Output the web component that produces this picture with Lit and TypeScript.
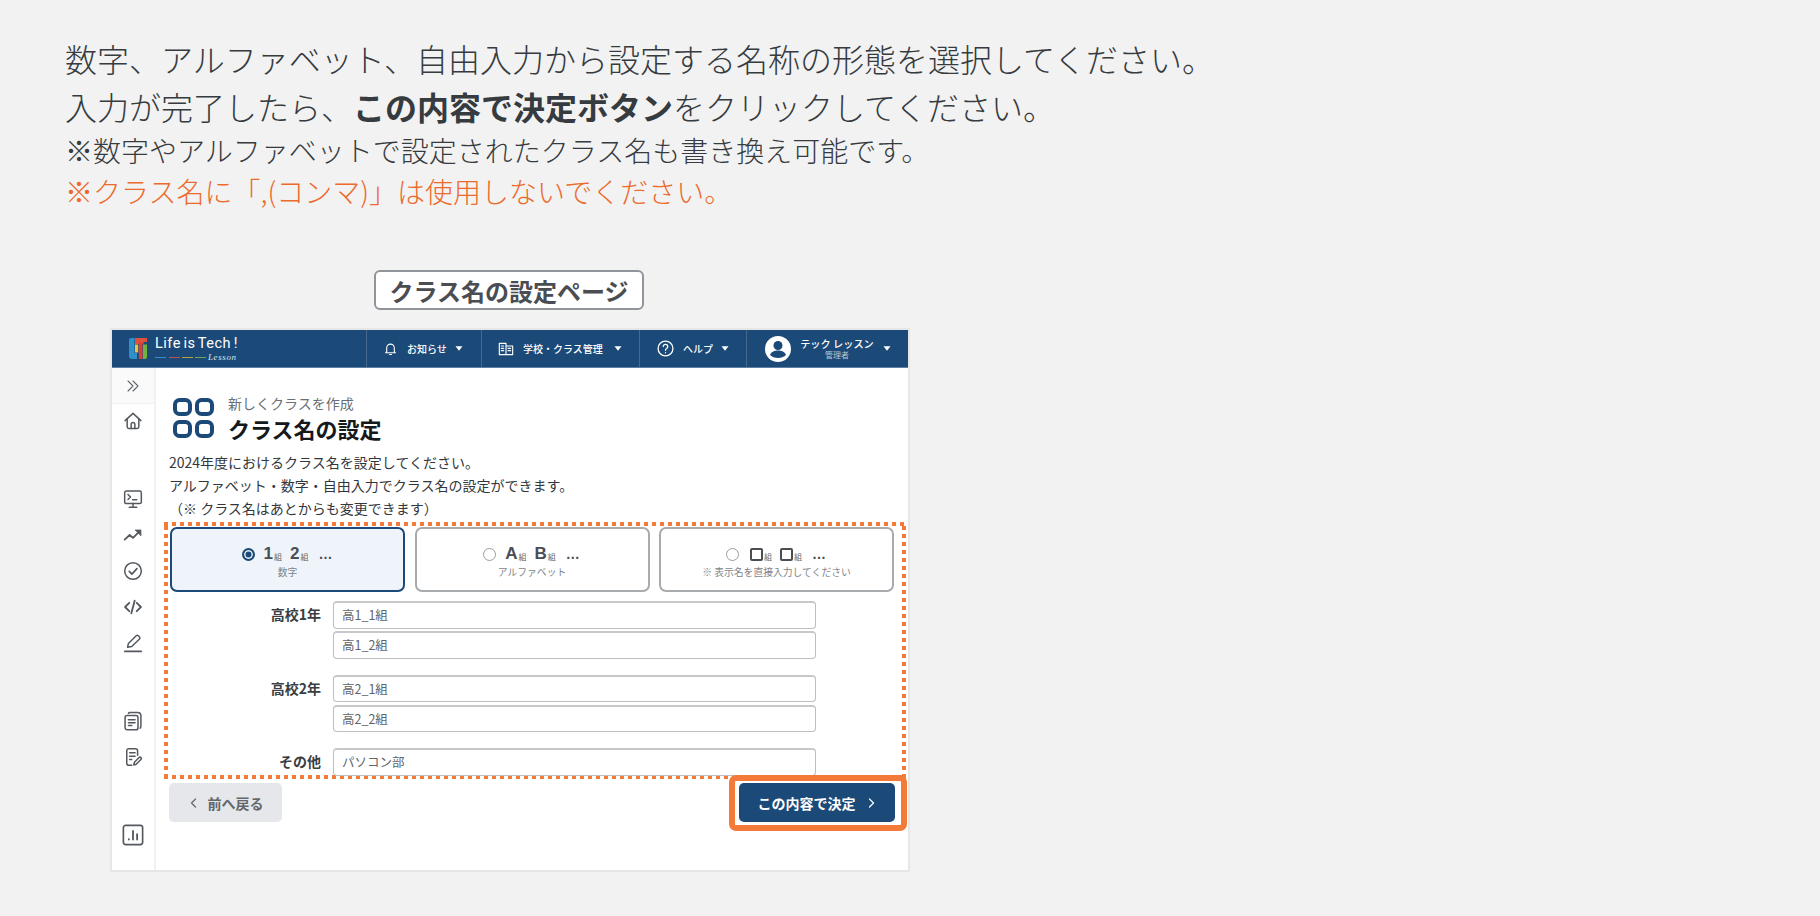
import { LitElement, html, css, svg } from "lit";
import { customElement } from "lit/decorators.js";

const ic = (w: number, h: number, body: unknown, sw = 1.8) =>
  html`<svg width=${w} height=${h} viewBox="0 0 24 24" fill="none" stroke="currentColor" stroke-width=${sw} stroke-linecap="round" stroke-linejoin="round">${body}</svg>`;

const caret = html`<svg class="caret" width="8" height="5" viewBox="0 0 8 5"><path d="M0.5 0.3h7L4 4.7z" fill="#fff"/></svg>`;

const sideIcons = {
  chev: svg`<path d="M4.500 4.500l7.500 7.500-7.500 7.500M12 4.500l7.500 7.500-7.500 7.500"/>`,
  home: svg`<path d="M2.500 11.500L12 2.800l9.500 8.700"/><path d="M5 9.500v9.500a2 2 0 0 0 2 2h10a2 2 0 0 0 2-2V9.500"/><path d="M9.800 21v-5a2.200 2.200 0 0 1 4.400 0v5"/>`,
  term: svg`<rect x="2" y="2.500" width="20" height="15" rx="2"/><path d="M6 6.500l3 3-3 3M11.500 13h5M12 17.500v4M7.500 21.800h9"/>`,
  trend: svg`<path d="M2 17.500l6-5.500 4 3.500 7.500-7.500" stroke-width="2.200"/><path d="M15 6h6.500v6.500z" fill="currentColor" stroke-width="1"/>`,
  check: svg`<circle cx="12" cy="12" r="10"/><path d="M7.500 12.500l3.200 3.200 6-6.500" stroke-width="2"/>`,
  code: svg`<path d="M7.500 7L2.500 12l5 5M16.500 7l5 5-5 5M14 4.500l-4 15" stroke-width="2.200"/>`,
  pen: svg`<path d="M5.500 17l1-4.500L15.800 3.200a1.800 1.800 0 0 1 2.500 0l1.500 1.500a1.800 1.800 0 0 1 0 2.500L10.500 16.200z"/><path d="M2 22h20" stroke-width="2"/>`,
  files: svg`<rect x="2.500" y="5.500" width="15.500" height="17" rx="2.500"/><path d="M6.500 2.800c.3-.6 1-1 1.800-1h9.200c2.300 0 4 1.700 4 4v12.500c0 .9-.4 1.700-1 2.200M6.500 10.500h8M6.500 14h8M6.500 17.500h4" /><path d="M10 4.800"/>`,
  form: svg`<path d="M10.500 22H7a2.500 2.500 0 0 1-2.500-2.500v-15A2.500 2.500 0 0 1 7 2h8a2.500 2.500 0 0 1 2.500 2.500V10"/><path d="M8 7h6.500M8 11h6.500M8 15h2.500"/><path d="M13 21.500l.7-3.200 5.600-5.600a1.500 1.500 0 0 1 2.200 2.200l-5.600 5.700z"/>`,
  chart: svg`<rect x="1.500" y="1.500" width="21" height="21" rx="2.500"/><path d="M7.500 16.500v.5M12 7.500V17M16.500 11V17" stroke-width="2"/>`,
};

@customElement("app-root")
export class AppRoot extends LitElement {
  static styles = css`
    :host {
      display: block;
      width: 1820px;
      height: 916px;
      background: #f2f2f2;
      overflow: hidden;
      font-family: "Noto Sans CJK JP", "Liberation Sans", sans-serif;
      color: #363b40;
    }
    .intro { padding: 33.500px 0 0 65px; height: 226px; box-sizing: border-box; }
    .l1 { font-size: 32px; line-height: 48px; font-weight: 300; white-space: nowrap; }
    .l3 { font-size: 28px; line-height: 41px; font-weight: 300; white-space: nowrap; }
    .red { color: #ec6a2c; }
    b { font-weight: 700; }
    .tagrow { display: flex; padding-left: 374px; height: 40px; margin-top: 44px; }
    .tag {
      box-sizing: border-box; width: 270px; height: 40px;
      border: 2px solid #8f959b; border-radius: 6px; background: #fff;
      font-size: 24px; font-weight: 700; color: #4a4d52;
      display: flex; align-items: center; justify-content: center;
    }
    .frame {
      margin: 18px 0 0 110px; width: 800px; height: 544px; box-sizing: border-box;
      border: 2px solid #e6e6e6; background: #fff; display: flex; flex-direction: column;
    }
    .hdr { height: 38px; flex: none; background: #1c4a78; border-bottom: 1px solid #5f82a3; box-sizing: border-box; display: flex; color: #fff; font-size: 10px; font-weight: 500; }
    .logo { width: 254px; display: flex; align-items: center; padding-left: 17px; box-sizing: border-box; }
    .logotxt { position: relative; margin-left: 8px; font: 400 14.500px/15px Roboto, sans-serif; letter-spacing: .5px; word-spacing: -1.500px; height: 26px; width: 90px; white-space: nowrap; }
    .lines { position: absolute; left: 0; top: 20px; }
    .lesson { position: absolute; left: 53px; top: 16px; font: italic 400 9px/11px "Liberation Serif", serif; letter-spacing: .6px; color: #dfe6ee; }
    .nav { display: flex; align-items: center; border-left: 1px solid #47698c; box-sizing: border-box; }
    .nav .t { white-space: nowrap; }
    .n1 { width: 115px; padding-left: 17px; gap: 10px; }
    .n2 { width: 158px; padding-left: 16px; gap: 9px; }
    .n3 { width: 107px; padding-left: 17px; gap: 9px; }
    .n4 { flex: 1; padding-left: 18px; }
    .caret { flex: none; }
    .n1 .caret { margin-left: -2px; }
    .n2 .caret { margin-left: 2px; }
    .n3 .caret { margin-left: -1px; }
    .user { margin-left: 4px; width: 84px; text-align: center; line-height: 12px; font-size: 10.200px; }
    .user small { display: block; font-size: 8px; line-height: 9px; color: #b9c7d6; font-weight: 400; }
    .n4 .caret { margin-left: 4px; }
    .content { flex: 1; display: flex; min-height: 0; }
    .side { width: 44px; flex: none; background: #fff; border-right: 2px solid #f1f1f1; box-sizing: border-box; display: flex; flex-direction: column; align-items: center; color: #54595f; }
    .toggle { width: 100%; height: 36px; background: #fafafa; border-bottom: 1px solid #f0f0f0; display: flex; align-items: center; justify-content: center; flex: none; box-sizing: border-box; color: #5f646a; }
    .side svg { display: block; flex: none; }
    .s-home { margin-top: 7px; }
    .s-term { margin-top: 58px; }
    .s-g { margin-top: 16px; }
    .s-files { margin-top: 58px; }
    .s-chart { margin-top: 57px; }
    .main { flex: 1; padding: 28px 0 0 14px; min-width: 0; }
    .ttl { display: flex; margin-left: 3px; height: 44px; }
    .ttlicon { color: #1c4a78; flex: none; margin-top: 2px; }
    .ttx { margin-left: 14px; }
    .sub { font-size: 14px; line-height: 14px; color: #6a6f75; font-weight: 400; }
    h1 { margin: 4px 0 0; font-size: 22px; line-height: 28px; font-weight: 700; color: #16191c; white-space: nowrap; }
    .desc { margin: 10.500px 0 0 -1px; font-size: 14px; line-height: 23px; color: #33373b; }
    .dot {
      margin: 2.500px 0 0 -6px; width: 742px; height: 257px; box-sizing: border-box;
      padding: 5px 0 0 6px;
      background:
        linear-gradient(90deg, #f47a3a 50%, transparent 50%) left top / 8px 4px repeat-x,
        linear-gradient(90deg, #f47a3a 50%, transparent 50%) left bottom / 8px 4px repeat-x,
        linear-gradient(0deg, #f47a3a 50%, transparent 50%) left top / 4px 8px repeat-y,
        linear-gradient(0deg, #f47a3a 50%, transparent 50%) right top / 4px 8px repeat-y;
    }
    .cards { display: flex; gap: 9.500px; }
    .card {
      box-sizing: border-box; width: 235px; height: 65px; border: 2px solid #a8abae; border-radius: 7px; background: #fff;
      display: flex; flex-direction: column; align-items: center; padding-top: 15px; color: #4a4e53;
    }
    .card.on { background: #eff4fb; border-color: #1c4a78; }
    .opt { display: flex; align-items: center; height: 20px; font: 700 17px/20px "Liberation Sans", sans-serif; white-space: nowrap; }
    .opt small { font: 400 8px/10px "Noto Sans CJK JP", sans-serif; margin: 5px 8px 0 1px; color: #666; }
    .opt i { font-style: normal; margin-left: 2px; letter-spacing: 1px; font-size: 14px; }
    .rad { width: 13px; height: 13px; box-sizing: border-box; border: 1.500px solid #9a9da1; border-radius: 50%; margin-right: 9px; }
    .rad.on { border: 2px solid #1c4a78; background: #1c4a78; box-shadow: inset 0 0 0 1.500px #eff4fb; }
    .sq { width: 13px; height: 13px; box-sizing: border-box; border: 2px solid #4a4e53; border-radius: 2px; }
    .rad + .sq { margin-left: 2px; }
    .cap { font-size: 9.800px; line-height: 14px; color: #80848a; margin-top: 1px; }
    .rows { display: flex; flex-direction: column; margin-top: 9px; }
    .row { display: grid; grid-template-columns: 151px 483px; column-gap: 12px; }
    .row + .row { margin-top: 16px; }
    .row label { text-align: right; font-size: 14px; font-weight: 700; line-height: 27.500px; color: #3a3e43; }
    .inputs { display: flex; flex-direction: column; gap: 2.500px; }
    .inp {
      box-sizing: border-box; height: 27.500px; border: 1px solid #bcbfc2; border-top: 2px solid #c6c8ca; border-radius: 4px; padding-left: 8px;
      font-size: 12.500px; line-height: 24.500px; color: #5f6469; background: #fff;
    }
    .foot { display: flex; justify-content: space-between; margin: 4px 0 0 -1px; width: 726px; }
    .btn { box-sizing: border-box; height: 39px; border-radius: 5px; display: flex; align-items: center; justify-content: center; font-size: 14px; font-weight: 700; }
    .back { width: 113px; background: #e5e7ea; color: #62676c; gap: 8px; }
    .go { width: 156px; background: #1c4a78; color: #fff; gap: 9px; position: relative; }
    .go::after { content: ""; position: absolute; inset: -8px -12px -9px -10px; border: 6px solid #f47a3a; border-radius: 7px; }
  `;

  private input(v: string) {
    return html`<div class="inp">${v}</div>`;
  }

  render() {
    const s = sideIcons;
    return html`
      <div class="intro">
        <div class="l1">数字、アルファベット、自由入力から設定する名称の形態を選択してください。</div>
        <div class="l1">入力が完了したら、<b>この内容で決定ボタン</b>をクリックしてください。</div>
        <div class="l3">※数字やアルファベットで設定されたクラス名も書き換え可能です。</div>
        <div class="l3 red">※クラス名に「,(コンマ)」は使用しないでください。</div>
      </div>
      <div class="tagrow"><div class="tag">クラス名の設定ページ</div></div>
      <div class="frame">
        <div class="hdr">
          <div class="logo">
            <svg width="18" height="21" viewBox="0 0 18 21">
              <path d="M0 2a2 2 0 0 1 2-2h3.500v15H8v6H3a3 3 0 0 1-3-3z" fill="#2e8fc9"/>
              <path d="M6 0h12v4h-3.500v2H6z" fill="#e0503f"/>
              <rect x="6" y="6.500" width="3.200" height="8" fill="#f2c230"/>
              <rect x="9.800" y="4.500" width="3.700" height="16.500" fill="#d63f3a"/>
              <path d="M14 6.500h4V19a2 2 0 0 1-2 2h-2z" fill="#6fb33f"/>
            </svg>
            <div class="logotxt">Life is Tech !
              <svg class="lines" width="54" height="3" viewBox="0 0 54 3"><path d="M0 1.500h11" stroke="#2e8fc9"/><path d="M14 1.500h11" stroke="#c9504a"/><path d="M27 1.500h11" stroke="#b5a23e"/><path d="M40 1.500h11" stroke="#6fa94f"/></svg>
              <span class="lesson">Lesson</span>
            </div>
          </div>
          <div class="nav n1">
            ${ic(13, 14, svg`<path d="M5 17V10a7 7 0 0 1 14 0v7l2 2H3zM10 22h4"/>`, 2)}
            <span class="t">お知らせ</span>${caret}
          </div>
          <div class="nav n2">
            ${ic(16, 16, svg`<path d="M2 3.500h10v17H2zM12 7.500h10v13H12zM5 7.500h3.500M5 11h3.500M5 14.500h3.500M15 11h4M15 14.500h4"/>`, 1.7)}
            <span class="t">学校・クラス管理</span>${caret}
          </div>
          <div class="nav n3">
            ${ic(17, 17, svg`<circle cx="12" cy="12" r="10.500"/><path d="M8.800 9.300a3.200 3.200 0 1 1 4.800 2.800c-1 .6-1.600 1.300-1.600 2.400M12 17.800v.2"/>`, 1.8)}
            <span class="t">ヘルプ</span>${caret}
          </div>
          <div class="nav n4">
            <svg width="26" height="26" viewBox="0 0 26 26"><circle cx="13" cy="13" r="13" fill="#fff"/><circle cx="13" cy="9.500" r="4.500" fill="#1c4a78"/><path d="M5 19c1.500-3.500 4.500-4.500 8-4.500s6.500 1 8 4.500c-2 2-5 3-8 3s-6-1-8-3z" fill="#1c4a78"/></svg>
            <div class="user">テック レッスン<small>管理者</small></div>
            ${caret}
          </div>
        </div>
        <div class="content">
          <div class="side">
            <div class="toggle">${ic(16, 16, s.chev, 1.6)}</div>
            <div class="s-home">${ic(20, 20, s.home)}</div>
            <div class="s-term">${ic(20, 20, s.term)}</div>
            <div class="s-g">${ic(20, 20, s.trend)}</div>
            <div class="s-g">${ic(20, 20, s.check)}</div>
            <div class="s-g">${ic(20, 20, s.code)}</div>
            <div class="s-g">${ic(20, 20, s.pen)}</div>
            <div class="s-files">${ic(20, 20, s.files)}</div>
            <div class="s-g">${ic(20, 20, s.form)}</div>
            <div class="s-chart">${ic(22, 22, s.chart)}</div>
          </div>
          <div class="main">
            <div class="ttl">
              <svg class="ttlicon" width="41" height="40" viewBox="0 0 41 40" fill="none" stroke="currentColor" stroke-width="4">
                <rect x="2" y="2" width="15" height="14" rx="4.500"/><rect x="24" y="2" width="15" height="14" rx="4.500"/>
                <rect x="2" y="24" width="15" height="14" rx="4.500"/><rect x="24" y="24" width="15" height="14" rx="4.500"/>
              </svg>
              <div class="ttx"><div class="sub">新しくクラスを作成</div><h1>クラス名の設定</h1></div>
            </div>
            <div class="desc">2024年度におけるクラス名を設定してください。<br>アルファベット・数字・自由入力でクラス名の設定ができます。<br>（※ クラス名はあとからも変更できます）</div>
            <div class="dot">
              <div class="cards">
                <div class="card on">
                  <div class="opt"><span class="rad on"></span>1<small>組</small>2<small>組</small><i>…</i></div>
                  <div class="cap">数字</div>
                </div>
                <div class="card">
                  <div class="opt"><span class="rad"></span>A<small>組</small>B<small>組</small><i>…</i></div>
                  <div class="cap">アルファベット</div>
                </div>
                <div class="card">
                  <div class="opt"><span class="rad"></span><span class="sq"></span><small>組</small><span class="sq"></span><small>組</small><i>…</i></div>
                  <div class="cap">※ 表示名を直接入力してください</div>
                </div>
              </div>
              <div class="rows">
                <div class="row"><label>高校1年</label><div class="inputs">${this.input("高1_1組")}${this.input("高1_2組")}</div></div>
                <div class="row"><label>高校2年</label><div class="inputs">${this.input("高2_1組")}${this.input("高2_2組")}</div></div>
                <div class="row"><label>その他</label><div class="inputs">${this.input("パソコン部")}</div></div>
              </div>
            </div>
            <div class="foot">
              <div class="btn back">${ic(12, 14, svg`<path d="M15 4l-8 8 8 8"/>`, 2.4)}前へ戻る</div>
              <div class="btn go">この内容で決定${ic(12, 14, svg`<path d="M9 4l8 8-8 8"/>`, 2.4)}</div>
            </div>
          </div>
        </div>
      </div>
    `;
  }
}
